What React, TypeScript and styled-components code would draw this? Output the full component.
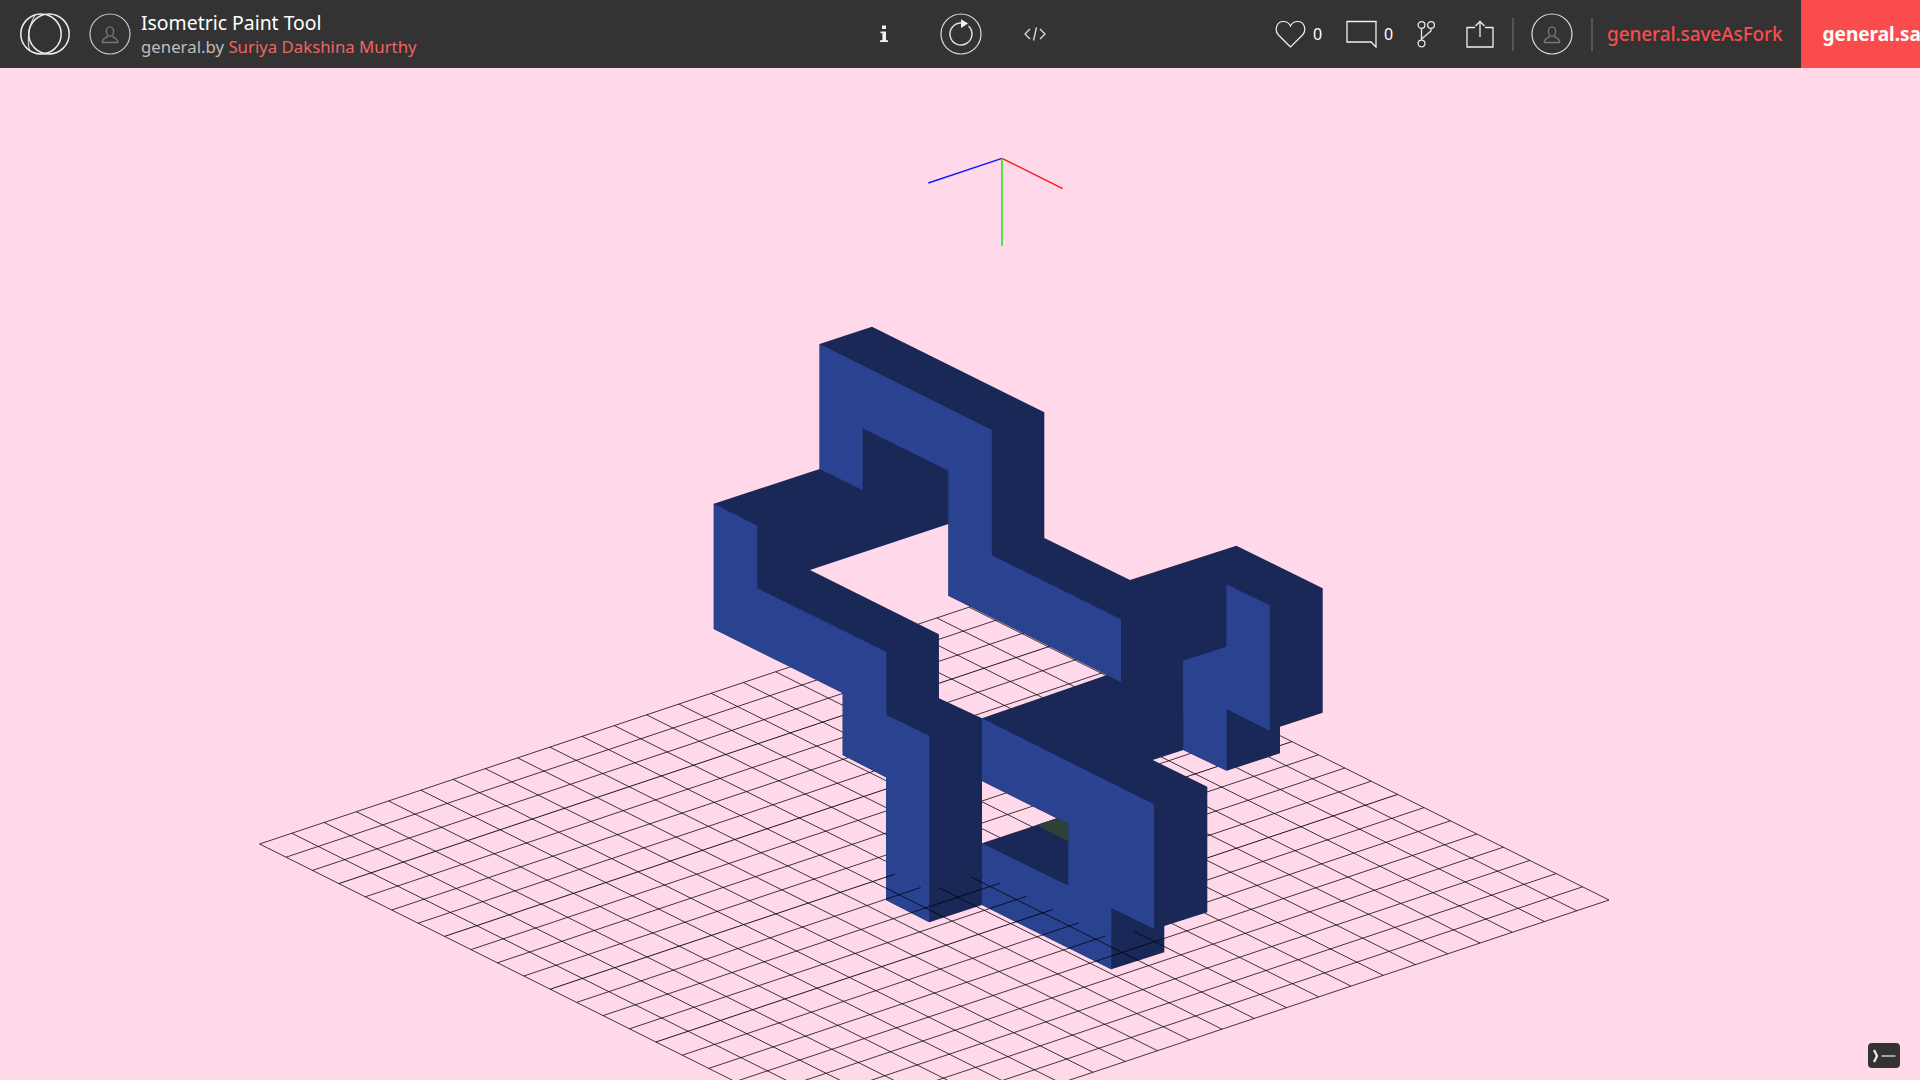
import React from "react";
import styled, { createGlobalStyle } from "styled-components";

const Global = createGlobalStyle`
  html, body { margin: 0; padding: 0; width: 100%; height: 100%; overflow: hidden; background: #ffd8ea; }
  #root { width: 100%; height: 100%; }
`;

const Page = styled.div`
  position: relative;
  width: 1920px;
  height: 1080px;
  overflow: hidden;
  display: flex;
  flex-direction: column;
  background: #ffd8ea;
  font-family: "Noto Sans", "Liberation Sans", sans-serif;
`;

const Header = styled.header`
  flex: none;
  height: 68px;
  background: #333333;
  display: flex;
  align-items: center;
  padding-left: 20px;
  overflow: hidden;
`;

const LeftGroup = styled.div`
  flex: 0 0 859px;
  display: flex;
  align-items: center;
`;

const CenterGroup = styled.div`
  flex: 0 0 396px;
  display: flex;
  align-items: center;
`;

const RightGroup = styled.div`
  flex: none;
  display: flex;
  align-items: center;
`;

const Logo = styled.svg`
  width: 50px;
  height: 42px;
  flex: none;
  display: block;
`;

const Avatar = styled.svg<{ $ml: number }>`
  width: 42px;
  height: 42px;
  flex: none;
  display: block;
  margin-left: ${(p) => p.$ml}px;
`;

const TitleBlock = styled.div`
  display: flex;
  flex-direction: column;
  margin-left: 10px;
  padding-top: 2px;
  white-space: nowrap;
`;

const Title = styled.div`
  font-size: 19.4px;
  line-height: 24px;
  color: #ffffff;
`;

const Sub = styled.div`
  font-size: 16.8px;
  line-height: 24px;
  color: #bdbdbd;
`;

const Author = styled.span`
  color: #ef6464;
`;

const Icon = styled.svg<{ $ml: number }>`
  display: block;
  flex: none;
  margin-left: ${(p) => p.$ml}px;
`;

const Count = styled.span<{ $ml: number }>`
  flex: none;
  font-size: 16px;
  line-height: 20px;
  width: 10px;
  margin-left: ${(p) => p.$ml}px;
  color: #ffffff;
`;

const Divider = styled.div<{ $ml: number }>`
  flex: none;
  width: 2px;
  height: 33px;
  background: #555555;
  margin-left: ${(p) => p.$ml}px;
`;

const ForkLink = styled.span`
  flex: none;
  margin-left: 14px;
  font-size: 19px;
  font-weight: 500;
  letter-spacing: -0.1px;
  color: #f94c4e;
  white-space: nowrap;
`;

const SaveButton = styled.div`
  flex: none;
  height: 68px;
  margin-left: 18px;
  padding: 0 22px;
  display: flex;
  align-items: center;
  background: #fa4b4d;
  color: #ffffff;
  font-size: 19px;
  font-weight: 700;
  white-space: nowrap;
`;

const Stage = styled.main`
  flex: 1;
  min-height: 0;
`;

const Scene = styled.svg`
  display: block;
  width: 1920px;
  height: 1012px;
`;

const ConsoleButton = styled.div`
  position: absolute;
  left: 1868px;
  top: 1043px;
  width: 32px;
  height: 25px;
  border-radius: 4px;
  background: #333333;
  display: flex;
  align-items: center;
  justify-content: center;
`;

const DARK = "#192856";
const BLUE = "#2a4391";

const L = { x: 259.6, y: 844 };
const U = { x: 32.25, y: -10.765 };
const V = { x: 26.42, y: 13.2 };
const N = 23;

const gp = (a: number, b: number) => ({
  x: L.x + a * U.x + b * V.x,
  y: L.y + a * U.y + b * V.y,
});

type Seg = { a0: number; b0: number; a1: number; b1: number; major?: boolean };

const gridSegs: Seg[] = [];
for (let i = 0; i <= N; i++) {
  gridSegs.push({ a0: 0, b0: i, a1: N, b1: i, major: i % 4 === 3 && i < 16 });
  gridSegs.push({ a0: i, b0: 0, a1: i, b1: N });
}

const overlaySegs: Seg[] = [
  { a0: 9, b0: 11, a1: 10.67, b1: 11, major: true },
  { a0: 9, b0: 12, a1: 10.67, b1: 12 },
  { a0: 9, b0: 13, a1: 12.3, b1: 13 },
  { a0: 9, b0: 14, a1: 12.3, b1: 14 },
  { a0: 9, b0: 15, a1: 12.3, b1: 15, major: true },
  { a0: 9, b0: 16, a1: 12.3, b1: 16 },
  { a0: 9, b0: 17, a1: 12.3, b1: 17 },
  { a0: 9, b0: 18, a1: 13.35, b1: 18 },
  { a0: 10, b0: 11, a1: 10, b1: 15 },
  { a0: 11, b0: 12.3, a1: 11, b1: 16 },
  { a0: 12, b0: 12.3, a1: 12, b1: 20 },
  { a0: 13, b0: 17.2, a1: 13, b1: 20 },
];

const GridLine = ({ s }: { s: Seg }) => {
  const p = gp(s.a0, s.b0);
  const q = gp(s.a1, s.b1);
  return (
    <line
      x1={p.x}
      y1={p.y}
      x2={q.x}
      y2={q.y}
      stroke="#000"
      strokeOpacity={s.major ? 0.95 : 0.86}
      strokeWidth={s.major ? 0.95 : 0.88}
    />
  );
};

const outline =
  "M819.6 344 L872 326.7 L1044.3 412.3 L1044.3 538 L1130 580 L1236.4 545.7 L1322.7 588.3 L1322.7 712.7 L1280 726.7 L1280 753.3 L1226.7 770.7 L1183.3 750 L1152.7 760 L1207.3 786.7 L1207.3 912.3 L1164.3 926 L1164.3 952.3 L1111.3 969.3 L982 905 L929.3 922.3 L886 900 L886 777.3 L842.7 755 L842.7 693 L713.8 629 L713.8 503.7 L819.6 469 Z " +
  "M810 570 L948.4 524 L948.4 595.7 L1107 675 L982 718.3 L939 698.3 L938.9 634.3 Z " +
  "M982 781 L1056.7 818.3 L982 843.3 Z";

const blueFaces = [
  "819.6,344 991.8,430 991.8,555.3 1121,619.3 1121,682 948.4,595.7 948.4,470.7 862.6,428.3 862.6,490 819.6,469",
  "713.8,503.7 757.2,525.7 757.2,588 886.4,652 886.4,715 929.3,735.7 929.3,922.3 886,900 886,777.3 842.7,755 842.7,693 713.8,629",
  "982,718.3 1154,804.3 1154,928.7 1111.3,908 1111.3,969.3 982,905 982,843.3 1068.3,885.7 1068.3,823.3 1056.7,818.3 982,781",
  "1226.4,584.3 1269.8,605.3 1269.8,730.7 1226.7,709.3 1226.7,770.7 1183.3,750 1183,660.7 1226.4,646.7",
];

const PersonGlyph = () => (
  <g fill="none" stroke="#777" strokeWidth="1.4">
    <ellipse cx="21" cy="18.5" rx="3.6" ry="4.6" />
    <path d="M18.5 23 C18 25 13.5 25.5 13.5 28 V29.5 H28.5 V28 C28.5 25.5 24 25 23.5 23" />
  </g>
);

export default function App() {
  return (
    <Page>
      <Global />
      <Header>
        <LeftGroup>
          <Logo viewBox="0 0 50 42">
            <g fill="none" stroke="#eeeeee" strokeWidth="1.5">
              <ellipse cx="21" cy="21" rx="20.2" ry="20" />
              <ellipse cx="29" cy="21" rx="20.2" ry="20" />
              <path d="M9.5 37 C7 28 8 14 15 2" strokeWidth="1" />
            </g>
          </Logo>
          <Avatar $ml={19} viewBox="0 0 42 42">
            <circle cx="21" cy="21" r="20" fill="none" stroke="#c8c8c8" strokeWidth="1.2" />
            <PersonGlyph />
          </Avatar>
          <TitleBlock>
            <Title>Isometric Paint Tool</Title>
            <Sub>
              general.by <Author>Suriya Dakshina Murthy</Author>
            </Sub>
          </TitleBlock>
        </LeftGroup>
        <CenterGroup>
          <Icon $ml={0} width="10" height="20" viewBox="0 0 10 20">
            <path
              fill="#f4f4f4"
              d="M3 1.5h4v3.6H3zM1.5 7.5H7V16.2H9V18H1V16.2H3.4V9.2H1.5z"
            />
          </Icon>
          <Icon $ml={51} width="42" height="42" viewBox="0 0 42 42">
            <circle cx="21" cy="21" r="20" fill="none" stroke="#dddddd" strokeWidth="1.2" />
            <path
              d="M21.5 10 A11 11 0 1 0 28.5 13"
              fill="none"
              stroke="#dddddd"
              strokeWidth="1.5"
            />
            <path d="M21 6.2 L28 10.6 L21 15 Z" fill="#f4f4f4" />
          </Icon>
          <Icon $ml={42} width="22" height="14" viewBox="0 0 22 14">
            <g fill="none" stroke="#e0e0e0" strokeWidth="1.3">
              <path d="M6 2 L1 7 L6 12" />
              <path d="M16 2 L21 7 L16 12" />
              <path d="M12.5 0.5 L9.5 13.5" />
            </g>
          </Icon>
        </CenterGroup>
        <RightGroup>
          <Icon $ml={0} width="31" height="28" viewBox="0 0 31 28">
            <path
              d="M15.5 27 L3.5 15 C-1 10 1.5 1.5 8.5 1.5 C12 1.5 14.5 4 15.5 6 C16.5 4 19 1.5 22.5 1.5 C29.5 1.5 32 10 27.5 15 Z"
              fill="none"
              stroke="#f0f0f0"
              strokeWidth="1.2"
            />
          </Icon>
          <Count $ml={7}>0</Count>
          <Icon $ml={23} width="31" height="28" viewBox="0 0 31 28">
            <path
              d="M1 1.5 H30 V27 L25 22 H1 Z"
              fill="none"
              stroke="#f0f0f0"
              strokeWidth="1.3"
            />
          </Icon>
          <Count $ml={7}>0</Count>
          <Icon $ml={23} width="19" height="28" viewBox="0 0 19 28">
            <g fill="none" stroke="#e8e8e8" strokeWidth="1.3">
              <circle cx="4.5" cy="5" r="3.4" />
              <circle cx="14" cy="5" r="3.4" />
              <circle cx="4.5" cy="23.5" r="3.4" />
              <path d="M4.5 8.4 V20" />
              <path d="M14 8.4 V11 L4.5 19" />
            </g>
          </Icon>
          <Icon $ml={30} width="28" height="28" viewBox="0 0 28 28">
            <g fill="none" stroke="#f0f0f0" strokeWidth="1.3">
              <path d="M9 7.5 H1 V27 H27 V7.5 H19" />
              <path d="M14 17 V1.5" />
              <path d="M9.5 6 L14 1.5 L18.5 6" />
            </g>
          </Icon>
          <Divider $ml={18} />
          <Avatar $ml={17} viewBox="0 0 42 42">
            <circle cx="21" cy="21" r="20" fill="none" stroke="#dddddd" strokeWidth="1.2" />
            <PersonGlyph />
          </Avatar>
          <Divider $ml={18} />
          <ForkLink>general.saveAsFork</ForkLink>
          <SaveButton>general.saveButton</SaveButton>
        </RightGroup>
      </Header>
      <Stage>
        <Scene viewBox="0 68 1920 1012">
          <defs>
            <clipPath id="base-clip">
              <polygon points="886,820 886,900 929.3,922.3 982,905 1111.3,969.3 1164.3,952.3 1164.3,900 1100,860 982,830" />
            </clipPath>
          </defs>
          <g>
            {gridSegs.map((s, i) => (
              <GridLine key={i} s={s} />
            ))}
          </g>
          <path d={outline} fill={DARK} fillRule="evenodd" />
          {blueFaces.map((p) => (
            <polygon key={p} points={p} fill={BLUE} />
          ))}
          <polygon points="1036.7,825 1056.7,818.3 1068.3,823.3 1068.3,841.7" fill="#2e4038" />
          <g clipPath="url(#base-clip)">
            {overlaySegs.map((s, i) => (
              <GridLine key={i} s={s} />
            ))}
          </g>
          <line x1="1002" y1="158.3" x2="928.3" y2="183" stroke="#1414ff" strokeWidth="1.4" />
          <line x1="1002" y1="158.3" x2="1062.7" y2="188.7" stroke="#ff1414" strokeWidth="1.4" />
          <line x1="1002" y1="158.3" x2="1002" y2="245.7" stroke="#14e814" strokeWidth="1.5" />
        </Scene>
      </Stage>
      <ConsoleButton>
        <svg width="26" height="16" viewBox="0 0 26 16">
          <path d="M3 2 L6 8 L3 14" fill="none" stroke="#eeeeee" strokeWidth="2.2" />
          <path d="M10.5 8 H24.5" stroke="#eeeeee" strokeWidth="1.2" />
        </svg>
      </ConsoleButton>
    </Page>
  );
}
